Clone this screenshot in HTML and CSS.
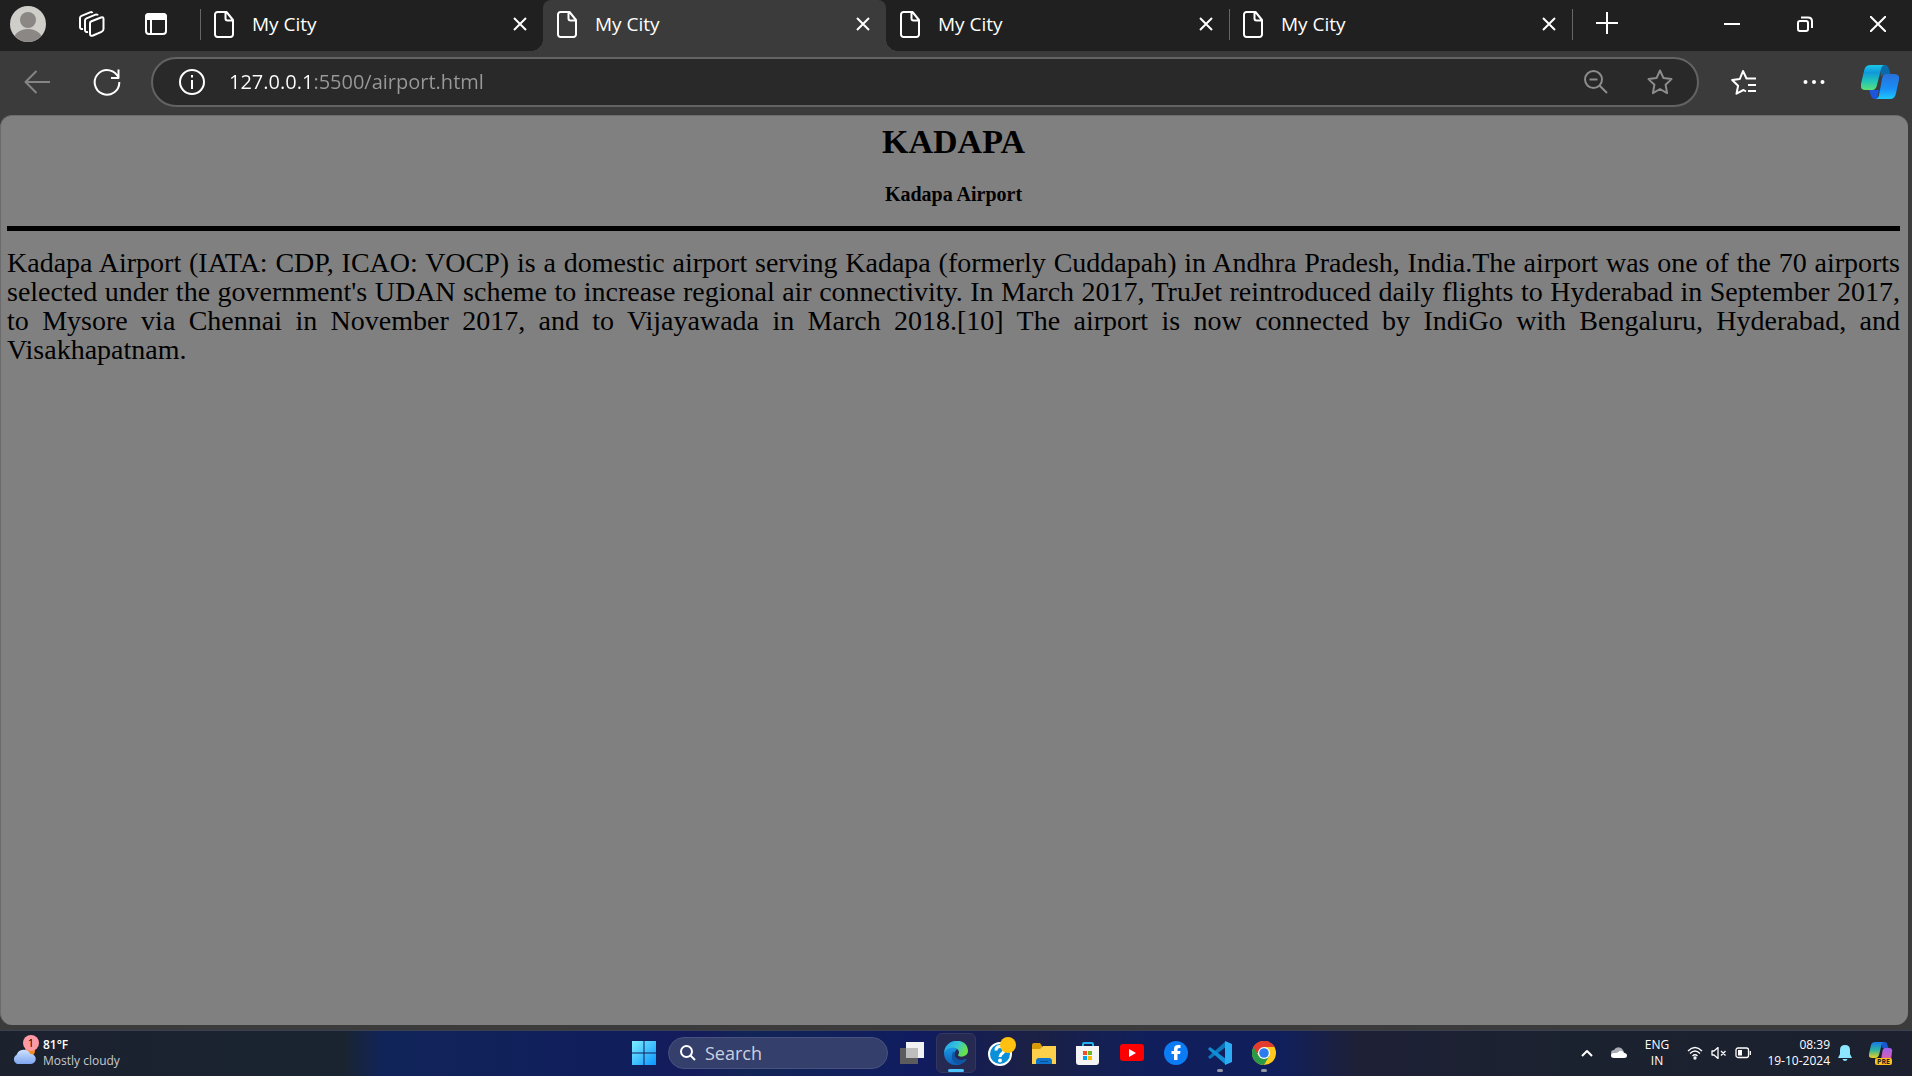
FILE: index.html
```html
<!DOCTYPE html>
<html lang="en">
<head>
<meta charset="utf-8">
<meta name="viewport" content="width=device-width, initial-scale=1">
<title>My City</title>
<link rel="stylesheet" href="styles.css">
</head>
<body>
<svg class="sprite" aria-hidden="true">
  <symbol id="page" viewBox="0 0 20 27"><path d="M3.500 1h9l6.500 8v14.500a2.500 2.500 0 0 1-2.500 2.500h-13A2.500 2.500 0 0 1 1 23.500v-20A2.500 2.500 0 0 1 3.500 1z M11.500 1v6.500a2 2 0 0 0 2 2H19"/></symbol>
  <symbol id="close" viewBox="0 0 14 14"><path d="M1 1l12 12M13 1L1 13"/></symbol>
</svg>

<div class="browser">
  <header class="titlebar">
    <div class="tools">
      <button class="icon-btn" aria-label="Profile">
        <svg width="36" height="36" viewBox="0 0 36 36"><clipPath id="face"><circle cx="18" cy="18" r="18"/></clipPath><g clip-path="url(#face)"><path fill="#d0cec9" d="M0 0h36v36H0z"/><circle cx="18" cy="14" r="8" fill="#8a8784"/><ellipse cx="18" cy="33" rx="14" ry="10" fill="#8a8784"/></g></svg>
      </button>
      <button class="icon-btn" aria-label="Workspaces">
        <svg class="line" width="28" height="28" viewBox="0 0 28 28"><path d="M14.500 11.200l9.500-3.700q2.500-.800 2.500 1.500v10q0 2-2 2.800l-8.500 3.700q-3 1-3-1.500V13q0-1.200 1.500-1.800zM11 22q-3 .5-3-2V10.500Q8 9 9.500 8.300l9-3.700q1.800-.6 2.500.8M6 19q-3 .5-3-2V8q0-1.500 1.500-2.200l8.500-3.500q1.800-.7 2.500.7"/></svg>
      </button>
      <button class="icon-btn" aria-label="Tab actions">
        <svg class="line" width="24" height="24" viewBox="0 0 24 24"><rect x="2" y="2" width="20" height="20" rx="3"/><path d="M7 7v15"/><path fill="#fff" stroke="none" d="M1 8V5q0-4 4-4h14q4 0 4 4v3z"/></svg>
      </button>
    </div>
    <nav class="tabs" aria-label="Tabs">
      <div class="tab first"><svg class="line" width="20" height="27"><use href="#page"/></svg><a href="#">My City</a><button class="icon-btn" aria-label="Close tab"><svg class="line" width="14" height="14"><use href="#close"/></svg></button></div>
      <div class="tab active"><svg class="line" width="20" height="27"><use href="#page"/></svg><a href="#">My City</a><button class="icon-btn" aria-label="Close tab"><svg class="line" width="14" height="14"><use href="#close"/></svg></button></div>
      <div class="tab"><svg class="line" width="20" height="27"><use href="#page"/></svg><a href="#">My City</a><button class="icon-btn" aria-label="Close tab"><svg class="line" width="14" height="14"><use href="#close"/></svg></button></div>
      <div class="tab last"><svg class="line" width="20" height="27"><use href="#page"/></svg><a href="#">My City</a><button class="icon-btn" aria-label="Close tab"><svg class="line" width="14" height="14"><use href="#close"/></svg></button></div>
    </nav>
    <button class="icon-btn new-tab" aria-label="New tab"><svg class="line" width="22" height="22" viewBox="0 0 22 22"><path d="M11 0v22M0 11h22"/></svg></button>
    <div class="window-controls">
      <button class="icon-btn" aria-label="Minimize"><svg class="line" width="16" height="16" viewBox="0 0 16 16"><path d="M0 8h16"/></svg></button>
      <button class="icon-btn" aria-label="Restore"><svg class="line" width="16" height="16" viewBox="0 0 16 16"><rect x="1" y="5" width="10" height="10" rx="2"/><path d="M4 1.500h7q4 0 4 4V12"/></svg></button>
      <button class="icon-btn" aria-label="Close window"><svg class="line" width="16" height="16" viewBox="0 0 16 16"><path d="M0 0l16 16M16 0L0 16"/></svg></button>
    </div>
  </header>

  <div class="toolbar">
    <div class="history">
      <button class="icon-btn" aria-label="Back"><svg class="line dim" width="26" height="24" viewBox="0 0 26 24"><path d="M12.500 1L1.500 12l11 11M1.500 12H26"/></svg></button>
      <button class="icon-btn" aria-label="Refresh"><svg class="line" width="28" height="28" viewBox="0 0 28 28"><path d="M25.500 10A12.300 12.300 0 1 0 26.300 14M25.500 1.500V10H18"/></svg></button>
    </div>
    <form class="address">
      <svg class="line" width="26" height="26" viewBox="0 0 26 26"><circle cx="13" cy="13" r="12"/><path d="M13 11v9M13 6v2.500"/></svg>
      <input class="url" type="text" aria-label="Address" value="127.0.0.1:5500/airport.html">
      <button type="button" class="icon-btn" aria-label="Zoom out"><svg class="line soft" width="24" height="24" viewBox="0 0 24 24"><circle cx="9.500" cy="9.500" r="8.500"/><path d="M5.500 9.500h8M15.500 15.500L23 23"/></svg></button>
      <button type="button" class="icon-btn" aria-label="Add to favorites"><svg class="line soft" width="26" height="26" viewBox="0 0 26 26"><path d="M13 1.500l3.500 7.600 8 1-5.900 5.700 1.500 8.300L13 20l-7.100 4.100 1.500-8.300L1.500 10.100l8-1z"/></svg></button>
    </form>
    <div class="actions">
      <button class="icon-btn" aria-label="Favorites"><svg class="line" width="26" height="26" viewBox="0 0 26 26"><path d="M15 22.500l-2.500-1.500-7 3.700 1.600-8L1.200 11l7.600-1L12 2l3.500 7.500H25M17 16h8M17 22h8"/></svg></button>
      <button class="icon-btn" aria-label="Settings and more"><svg width="22" height="6" viewBox="0 0 22 6" fill="#fff"><circle cx="2.500" cy="3" r="2"/><circle cx="11" cy="3" r="2"/><circle cx="19.500" cy="3" r="2"/></svg></button>
      <button class="icon-btn" aria-label="Copilot">
        <svg width="38" height="34" viewBox="0 0 38 34"><defs><linearGradient id="c1" x2="0" y2="1"><stop stop-color="#18c8e8"/><stop offset=".3" stop-color="#1098dc"/><stop offset=".65" stop-color="#22c4b8"/><stop offset="1" stop-color="#5ce078"/></linearGradient><linearGradient id="c2" x2="0" y2="1"><stop stop-color="#2870d8"/><stop offset=".6" stop-color="#1890f8"/><stop offset="1" stop-color="#20c8fa"/></linearGradient></defs>
        <path fill="#0b6ba8" d="M19 0h5q3 0 4 4l1.500 5H24q-3 0-4 4z"/><path fill="#1c55dc" d="M8 25h10l-2 9h-2q-3 0-4-3z"/><path fill="url(#c1)" d="M9 0h15q-3 0-4 4l-4 16q-1 5-5 5H4q-5 0-4-6L3 6q1-6 6-6z"/><path fill="url(#c2)" d="M24 9h9q6 0 5 6l-3 13q-1 6-6 6H14q3 0 4-4l3-16q1-5 3-5z"/></svg>
      </button>
    </div>
  </div>

  <main class="viewport">
    <h1>KADAPA</h1>
    <h3>Kadapa Airport</h3>
    <hr>
    <p>Kadapa Airport (IATA: CDP, ICAO: VOCP) is a domestic airport serving Kadapa (formerly Cuddapah) in Andhra Pradesh, India.The airport was one of the 70 airports selected under the government's UDAN scheme to increase regional air connectivity. In March 2017, TruJet reintroduced daily flights to Hyderabad in September 2017, to Mysore via Chennai in November 2017, and to Vijayawada in March 2018.[10] The airport is now connected by IndiGo with Bengaluru, Hyderabad, and Visakhapatnam.</p>
  </main>
</div>

<footer class="taskbar">
  <button class="weather">
    <span class="weather-icon">
      <svg width="24" height="22" viewBox="0 0 24 22"><defs><linearGradient id="cl" x2="0" y2="1"><stop stop-color="#cfe2ff"/><stop offset="1" stop-color="#7ea6f0"/></linearGradient></defs><circle cx="18" cy="9" r="5" fill="#f88a1c"/><path fill="url(#cl)" d="M5 22a5 5 0 0 1-.5-9A7.500 7.500 0 0 1 18.500 12 5 5 0 0 1 19 22z"/></svg>
      <span class="badge">1</span>
    </span>
    <span class="stack"><b>81°F</b><span>Mostly cloudy</span></span>
  </button>

  <div class="apps">
    <button class="app" aria-label="Start"><svg width="24" height="24" viewBox="0 0 24 24"><defs><linearGradient id="w" x2="1" y2="1"><stop stop-color="#7cf0ff"/><stop offset="1" stop-color="#0a94ff"/></linearGradient></defs><path fill="url(#w)" d="M0 0h11.500v11.500H0zM12.500 0H24v11.500H12.500zM0 12.500h11.500V24H0zM12.500 12.500H24V24H12.500z"/></svg></button>
    <label class="search">
      <svg class="line" width="16" height="16" viewBox="0 0 16 16"><circle cx="6.500" cy="6.500" r="5.500"/><path d="M10.500 10.500L15 15"/></svg>
      <input type="text" placeholder="Search" aria-label="Search">
    </label>
    <button class="app" aria-label="Task view"><svg width="24" height="24" viewBox="0 0 24 24"><path fill="#5c5c5e" d="M0 7h18v16H0z"/><path fill="#f2f2f2" d="M6 1h18v16H6z"/><path fill="#bdbdbd" d="M6 7h12v10H6z"/></svg></button>
    <button class="app current" aria-label="Edge"><svg width="24" height="24" viewBox="0 0 24 24"><defs><linearGradient id="e1" x2="1" y2=".4"><stop stop-color="#1c9de8"/><stop offset=".55" stop-color="#36c3dc"/><stop offset="1" stop-color="#68e04c"/></linearGradient><linearGradient id="e2" x2="0" y2="1"><stop stop-color="#1897e8"/><stop offset="1" stop-color="#1060b8"/></linearGradient></defs><path fill="url(#e2)" d="M0 12a12 12 0 0 0 18 10.500q3-1.500 4.500-4.500-8 3-11.500-2-2-4 2-8Q6 3 0 12z"/><path fill="#1254a4" d="M9 11q-4 9 5 12.500 6-1 8.500-5.500-8 2.500-11.500-2-1.500-3 1-5z"/><path fill="url(#e1)" d="M0 12C1-4 24-4 24 10c0 6-9 7-10 4 2-2 1-6-3-7Q4 6 0 12z"/></svg></button>
    <button class="app" aria-label="Get help"><svg width="32" height="32" viewBox="0 0 32 32"><circle cx="16" cy="17" r="11" fill="#0a90d8" stroke="#fff" stroke-width="2"/><path d="M12 13.500q0-4 4-4t4 3.500q0 2-2 3.500t-2 3.500" fill="none" stroke="#fff" stroke-width="3"/><circle cx="16" cy="23.500" r="2" fill="#fff"/><circle cx="24" cy="8" r="8" fill="#ffc010"/></svg></button>
    <button class="app" aria-label="File Explorer"><svg width="24" height="24" viewBox="0 0 24 24"><path fill="#d99a08" d="M0 4q0-2 2-2h6l2 3v4H0z"/><path fill="#fdd04c" d="M0 8h8l3-3h13v18H0z"/><path fill="#0c74cc" d="M4 23v-3q0-3 3-3h10q3 0 3 3v3z"/><path stroke="#0b4e94" stroke-width="1" d="M8 20.500h8"/></svg></button>
    <button class="app" aria-label="Microsoft Store"><svg width="24" height="24" viewBox="0 0 24 24"><path fill="none" stroke="#22b0f0" stroke-width="2" d="M7 6V3q0-1 1-1h8q1 0 1 1v3"/><path fill="#f4f4f4" d="M0 5h23v16q0 3-3 3H3q-3 0-3-3z"/><path fill="#f25022" d="M7 10h4v4H7z"/><path fill="#70b81c" d="M12 10h4v4h-4z"/><path fill="#00a4ef" d="M7 15h4v4H7z"/><path fill="#ffb900" d="M12 15h4v4h-4z"/></svg></button>
    <button class="app" aria-label="YouTube"><svg width="24" height="24" viewBox="0 0 24 24"><rect y="3" width="24" height="17" rx="3" fill="#f00"/><path fill="#fff" d="M9 8l7 4-7 4z"/></svg></button>
    <button class="app" aria-label="Facebook"><svg width="24" height="24" viewBox="0 0 24 24"><circle cx="12" cy="12" r="12" fill="#0c7cf4"/><path fill="#fff" d="M10 19v-6H7.500v-3H10V8q0-4 4-4h2.500v3H15q-1.500 0-1.500 1.500V10h3l-.5 3h-2.500v6z"/></svg></button>
    <button class="app open" aria-label="Visual Studio Code"><svg width="24" height="24" viewBox="0 0 24 24"><path fill="#0b78bc" d="M0 16l2 2L18 6V0L1 15z"/><path fill="#1190d8" d="M0 8l2-2 16 12v6L1 9z"/><path fill="#2cacf4" d="M17 0l7 3v18l-7 3z"/></svg></button>
    <button class="app open" aria-label="Chrome"><svg width="24" height="24" viewBox="0 0 24 24"><circle cx="12" cy="12" r="12" fill="#fcc91c"/><path fill="#e33b2e" d="M12 12H1.600L1.600 6A12 12 0 0 1 22.400 6H12z"/><path fill="#2a9a48" d="M1.600 6A12 12 0 0 0 12 24l5.200-9L12 12 6.800 15z"/><path fill="#e33b2e" d="M12 6h10.400A12 12 0 0 0 1.600 6L5 10z"/><circle cx="12" cy="12" r="6" fill="#fff"/><circle cx="12" cy="12" r="4.800" fill="#2c7cf0"/></svg></button>
  </div>

  <div class="tray">
    <button class="icon-btn" aria-label="Hidden icons"><svg class="line" width="12" height="8" viewBox="0 0 12 8"><path d="M1 7l5-5 5 5"/></svg></button>
    <svg class="cloud" width="16" height="12" viewBox="0 0 16 12"><path fill="#a9acb2" d="M3 9a3 3 0 0 1 0-6 5 5 0 0 1 9 0l2 4z"/><path fill="#fff" d="M3 11q-3 0-3-2.500T3 6q3 .5 5-1.500t5 1.500q3 0 3 2.500T13 11z"/></svg>
    <button class="stack lang"><span>ENG</span><span>IN</span></button>
    <button class="status" aria-label="Network, sound and battery">
      <svg class="line mid" width="16" height="14" viewBox="0 0 16 14"><path d="M1 5q7-7 14 0M3 7.500q5-5 10 0M5.500 10q2.500-2.500 5 0"/><circle cx="8" cy="12" r="1"/></svg>
      <svg class="line mid" width="16" height="12" viewBox="0 0 16 12"><path d="M1 4h2l4-3.500v11L3 8H1zM10 4l4.500 4.500M14.500 4L10 8.500"/></svg>
      <svg class="line mid" width="16" height="12" viewBox="0 0 16 12"><rect x="1" y="1" width="12.500" height="9.500" rx="2"/><path d="M15.300 4v4"/><path fill="#fff" stroke="none" d="M3 3h4v5.500H3z"/></svg>
    </button>
    <button class="stack clock"><span>08:39</span><span>19-10-2024</span></button>
    <button class="icon-btn bell" aria-label="Notifications"><svg width="14" height="16" viewBox="0 0 14 16"><path fill="#8ce6ff" d="M7 0q5 0 5 5v4l2 4H0l2-4V5q0-5 5-5zM4.500 14h5q-.5 2-2.500 2t-2.500-2z"/></svg></button>
    <button class="icon-btn copilot" aria-label="Copilot preview">
      <svg width="24" height="22" viewBox="0 0 24 22"><defs><linearGradient id="p1" x2="0" y2="1"><stop stop-color="#1878e8"/><stop offset=".5" stop-color="#2cb4a0"/><stop offset="1" stop-color="#f0d020"/></linearGradient><linearGradient id="p2" x2="0" y2="1"><stop stop-color="#a060f0"/><stop offset="1" stop-color="#f06090"/></linearGradient></defs><path fill="#1858d0" d="M12 0h4q2 0 2.500 3l1 3h-6z"/><path fill="url(#p1)" d="M6 0h9q-2 0-2.500 3L10 13q-1 3-3 3H3q-4 0-3-4l2-9q1-3 4-3z"/><path fill="url(#p2)" d="M16 6h4q4 0 3 4l-1 8q-1 4-4 4H9q2 0 3-4l1.500-9q.5-3 2.500-3z"/></svg>
      <span class="pre">PRE</span>
    </button>
  </div>
</footer>
</body>
</html>
```
FILE: styles.css
```css
* { box-sizing: border-box; }

body {
  margin: 0;
  min-height: 100vh;
  display: flex;
  flex-direction: column;
  background: #3b3b3b;
  color: #fff;
  font-family: "Segoe UI", "Open Sans", "Noto Sans", sans-serif;
}

button {
  padding: 0;
  border: 0;
  background: none;
  color: inherit;
  font: inherit;
}

input { min-width: 0; border: 0; outline: 0; padding: 0; background: none; font: inherit; }
svg { display: block; flex: none; }
.sprite { position: absolute; width: 0; height: 0; }
.line { fill: none; stroke: #fff; stroke-width: 2; stroke-linejoin: round; }
.dim { stroke: #858585; }
.soft { stroke: #8c8c8c; }
.mid { stroke-width: 1.3; }
.icon-btn { display: flex; align-items: center; justify-content: center; }

.browser { flex: 1; display: flex; flex-direction: column; }

/* Title bar and tabs */
.titlebar { display: flex; height: 51px; background: #202020; }
.tools { display: flex; align-items: center; gap: 31px; width: 200px; padding: 0 0 3px 10px; }
.tools .icon-btn + .icon-btn + .icon-btn { margin-left: 8px; }
.tabs { flex: 0 1 1372px; display: flex; }
.tab {
  position: relative;
  flex: 1;
  display: flex;
  align-items: center;
  padding: 0 16px 3px 14px;
  font-size: 19px;
}
.tab a { flex: 1; margin-left: 18px; padding-bottom: 1px; color: inherit; text-decoration: none; }
.tab.first, .tab.last, .new-tab { position: relative; }
.tab.first::before, .tab.last::before, .new-tab::before {
  content: "";
  position: absolute;
  left: 0;
  top: 9px;
  height: 31px;
  width: 1px;
  background: #666;
}
.tab.active { background: #3b3b3b; border-radius: 8px 8px 0 0; }
.tab.active::before, .tab.active::after {
  content: "";
  position: absolute;
  bottom: 0;
  width: 12px;
  height: 12px;
}
.tab.active::before { right: 100%; background: radial-gradient(circle at 0 0, #202020 12px, #3b3b3b 12px); }
.tab.active::after { left: 100%; background: radial-gradient(circle at 100% 0, #202020 12px, #3b3b3b 12px); }
.new-tab { width: 70px; padding-bottom: 5px; }
.window-controls { display: flex; gap: 57px; margin-left: auto; padding: 0 26px 3px 0; }

/* Toolbar */
.toolbar { display: flex; align-items: center; height: 64px; padding: 0 13px 2px 24px; }
.history { display: flex; align-items: center; gap: 43px; width: 127px; }
.address {
  flex: 1;
  display: flex;
  align-items: center;
  height: 50px;
  padding: 0 24px 0 26px;
  border: 2px solid #636363;
  border-radius: 25px;
  background: #292929;
}
.url {
  flex: 1;
  margin: 0 24px;
  font-size: 20px;
  line-height: 32px;
  color: transparent;
  background: linear-gradient(90deg, #fff 85px, #999 85px);
  background-clip: text;
}
.address .icon-btn + .icon-btn { margin-left: 39px; }
.actions { display: flex; align-items: center; gap: 46px; padding-left: 32px; }
.actions .icon-btn:last-child { margin-left: -10px; }

/* Page shown in the browser */
.viewport {
  flex: 1;
  margin: 0 4px 5px 0;
  padding: 6px 8px 24px 6px;
  border: 1px solid #6b6b6b;
  border-width: 1px 0 0 1px;
  border-radius: 12px;
  background: #808080;
  color: #000;
  font-family: "Liberation Serif", serif;
}
.viewport h1 { margin: 0; font-size: 34px; line-height: 40px; text-align: center; }
.viewport h3 { margin: 20px 0; font-size: 20px; line-height: 24px; text-align: center; }
.viewport hr { height: 5px; margin: 0; border: 0; background: #000; }
.viewport p { margin: 17px 0 0; font-size: 28px; line-height: 29px; text-align: justify; }

/* Taskbar */
.taskbar {
  display: grid;
  grid-template-columns: 1fr auto 1fr;
  height: 46px;
  padding: 0 4px 2px 0;
  border-top: 1px solid #3b4152;
  font-size: 12px;
  line-height: 16px;
  background: linear-gradient(90deg, #1c212e 0, #1a2431 18%, #112459 20%, #101e5c 33%, #161b5c 36%, #122556 39%, #101c60 48%, #1b2044 54%, #101f5c 60%, #101f5c 67%, #1e2036 71%, #1b222f 82%, #1c202f 100%);
}
.weather { display: flex; align-items: center; gap: 7px; padding-left: 12px; justify-self: start; }
.weather-icon { position: relative; }
.badge {
  position: absolute;
  left: 11px;
  top: -7px;
  width: 16px;
  height: 16px;
  border-radius: 50%;
  background: #ff99a4;
  color: #000;
  font-size: 11px;
}
.stack { display: flex; flex-direction: column; text-align: left; }
.stack b { font-weight: 600; }
.weather .stack span { color: #c8cad0; }
.apps { display: flex; align-items: center; }
.app { position: relative; width: 44px; height: 43px; display: flex; align-items: center; justify-content: center; }
.search {
  display: flex;
  align-items: center;
  gap: 9px;
  width: 220px;
  height: 32px;
  margin: 0 2px;
  padding: 0 11px;
  border: 1px solid #48527e;
  border-radius: 16px;
  background: #343f6c;
}
.search input { flex: 1; color: #fff; font-size: 18px; line-height: 24px; }
.search input::placeholder { color: #ccd0de; opacity: 1; }
.app.current::before {
  content: "";
  position: absolute;
  inset: 2px 2px 1px;
  border: 1px solid #34385e;
  border-radius: 6px;
  background: #262a52;
}
.app.current svg { position: relative; }
.app.current::after, .app.open::after {
  content: "";
  position: absolute;
  bottom: 2px;
  width: 6px;
  height: 3px;
  border-radius: 2px;
  background: #9297a6;
}
.app.current::after { width: 16px; background: #4cc2ff; }
.tray { display: flex; align-items: center; justify-content: flex-end; padding-right: 15px; }
.cloud { margin-left: 18px; }
.lang { width: 60px; text-align: center; }
.status { display: flex; align-items: center; gap: 8px; }
.stack.clock { width: 79px; text-align: right; }
.bell { margin-left: 8px; }
.copilot { position: relative; margin-left: 17px; }
.pre {
  position: absolute;
  left: 6px;
  bottom: -1px;
  padding: 0 2px;
  border-radius: 2px;
  background: #ffc01c;
  color: #222;
  font-size: 7px;
  font-weight: 700;
  line-height: 7px;
}
```
